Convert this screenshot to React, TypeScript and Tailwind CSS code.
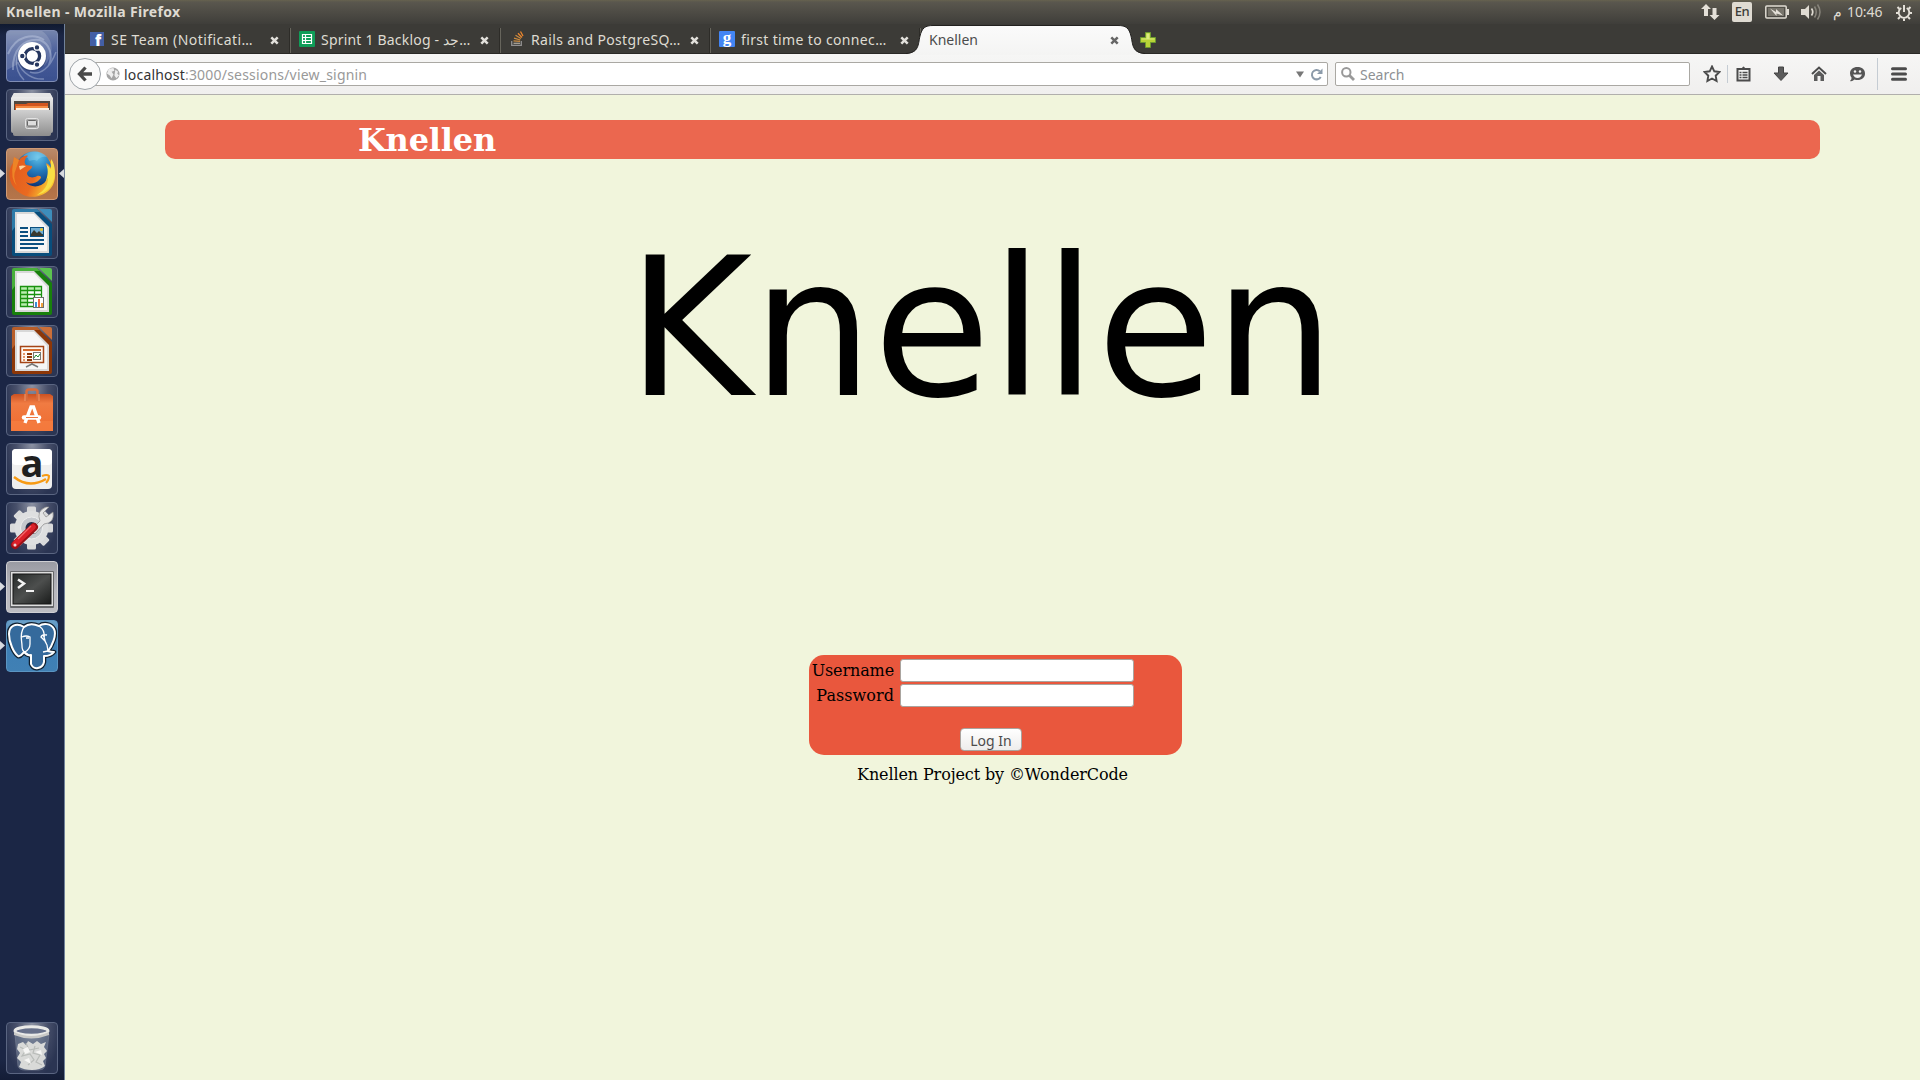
import React, { ReactNode } from 'react';

type Pip = 'none' | 'left' | 'both';

function Tile({ children, tone = 'plain', pip = 'none' }: { children: ReactNode; tone?: keyof typeof tones; pip?: Pip }) {
  return (
    <div className="relative h-[52px] w-16 shrink-0 pl-1.5">
      {pip !== 'none' && (
        <svg className="absolute left-0 top-[21px]" width="5" height="9" viewBox="0 0 5 9"><path d="M0 0L5 4.5L0 9Z" fill="#d7dae0" /></svg>
      )}
      {pip === 'both' && (
        <svg className="absolute left-[59px] top-[21px]" width="5" height="9" viewBox="0 0 5 9"><path d="M5 0L0 4.5L5 9Z" fill="#d7dae0" /></svg>
      )}
      <div className={`h-[52px] w-[52px] overflow-hidden rounded-[4px] border ${tones[tone]}`}>
        <svg className="-ml-px -mt-px block max-w-none" width="52" height="52" viewBox="0 0 52 52">{children}</svg>
      </div>
    </div>
  );
}

const tones = {
  plain: 'border-[#5a6581] bg-[radial-gradient(ellipse_at_50%_0%,#8c92a3_0%,#474f6a_45%,#2b3553_80%)]',
  ubuntu: 'border-[#7f8db5] bg-[linear-gradient(180deg,#7484ad,#4a5f9a_45%,#3b5190)]',
  fox: 'border-[#d09b76] bg-[linear-gradient(180deg,#b98a6a,#ab6b42_50%,#b5754a)]',
  term: 'border-[#cfcfd3] bg-[linear-gradient(180deg,#9a9ba3,#b9b9bf_60%,#bdbdc2)]',
  pg: 'border-[#5b95c2] bg-[linear-gradient(180deg,#6ba0c8,#3d7eb5_45%,#4080b4)]',
};

function Office({ dark, light, children }: { dark: string; light: string; children: ReactNode }) {
  return (
    <g>
      <path d="M8 2H31L46 17V47Q46 49 44 49H8Q6 49 6 47V4Q6 2 8 2Z" fill={dark} />
      <path d="M8 2H31L34 5H9V20L6 24V4Q6 2 8 2Z" fill={light} opacity=".7" />
      <path d="M9 5H28L43 20V46H9Z" fill="#d8d8d8" />
      <path d="M11 7H28L41 21V44H11Z" fill="#f6f6f6" />
      <path d="M33 2H44Q46 2 46 4V15Z" fill={light} />
      {children}
    </g>
  );
}

function Launcher() {
  return (
    <aside className="flex w-[65px] shrink-0 flex-col gap-[7px] border-r border-[#71829a] bg-[linear-gradient(180deg,#101a30_0px,#1b2645_12px,#1b2645_98%,#141d36)] pb-1.5 pt-1.5">
      <Tile tone="ubuntu">
        <g fill="none" stroke="#b9c5e0" opacity=".45">
          <path d="M7 40C6 20 18 8 34 10C44 14 47 25 43 35" strokeWidth="2" />
          <path d="M2 24C10 5 28 3 38 10" strokeWidth="2" />
          <path d="M18 50C6 38 10 22 18 16M24 42C34 46 44 38 50 22M12 32C16 44 28 50 38 49" strokeWidth="1.5" />
        </g>
        <path d="M1 1H36C51 12 46 28 38 36L26 12C12 12 10 25 12 34L1 40Z" fill="#fff" opacity=".15" />
        <circle cx="26" cy="27" r="14.5" fill="#24345f" opacity=".5" />
        <circle cx="26" cy="26" r="14" fill="#fff" />
        <circle cx="26.3" cy="26" r="7.3" fill="none" stroke="#26375f" strokeWidth="3.3" />
        <g fill="#26375f" stroke="#fff" strokeWidth="1.2"><circle cx="16.3" cy="26" r="2.8" /><circle cx="31" cy="17.4" r="2.8" /><circle cx="31" cy="34.6" r="2.8" /></g>
      </Tile>
      <Tile>
        <defs>
          <linearGradient id="steel" x2="0" y2="1"><stop stopColor="#d0d0d0" /><stop offset="1" stopColor="#8d8d8d" /></linearGradient>
          <linearGradient id="steelTop" x2="0" y2="1"><stop stopColor="#f4f4f4" /><stop offset="1" stopColor="#9a9a9a" /></linearGradient>
        </defs>
        <path d="M8 4H44L47 9V42Q47 44 45 44H7Q5 44 5 42V9Z" fill="url(#steelTop)" />
        <path d="M8 4H44L46 8H6Z" fill="#e5e5e5" />
        <rect x="8" y="12" width="36" height="11" fill="#504740" />
        <path d="M9 15H20L22 14H42V22H9Z" fill="#d3561e" />
        <path d="M10 17H42V21H10Z" fill="#f48b43" /><path d="M10 19H43V21H10Z" fill="#fff0df" />
        <path d="M7 21H45V45Q45 47 43 47H9Q7 47 7 45Z" fill="url(#steel)" />
        <rect x="19.5" y="29.5" width="13" height="10" rx="2" fill="#aaa" stroke="#e4e4e4" />
        <rect x="21.5" y="31.5" width="9" height="5.5" rx="1" fill="#ddd" stroke="#666" />
      </Tile>
      <Tile tone="fox" pip="both">
        <defs>
          <radialGradient id="globe" cx=".6" cy=".15" r=".8"><stop stopColor="#5fc0e8" /><stop offset=".5" stopColor="#2176b8" /><stop offset="1" stopColor="#0d3475" /></radialGradient>
          <linearGradient id="fur" x1="0" x2="1" y2=".4"><stop stopColor="#e0571e" /><stop offset=".65" stopColor="#ea6a20" /><stop offset="1" stopColor="#f9c630" /></linearGradient>
        </defs>
        <circle cx="28" cy="22" r="18.5" fill="url(#globe)" />
        <path d="M17 8C24 2 35 2 41 9C36 8 33 10 31 13C27 10 23 16 22 10Z" fill="#9bdcf4" opacity=".35" />
        <path d="M7 15L8 9L13 12C17 7 22 7 22 8C18 11 18 15 20 17L26 18C27 21 22 22 21 25C21 29 26 31 31 28C35 27 36 30 34 31C29 37 22 36 20 34C24 40 35 40 40 33C44 28 43 21 40 15C43 16 44 18 45 20C45 15 43 11 40 8C50 16 52 31 45 40C38 49 24 52 14 45C2 38 1 23 7 15Z" fill="url(#fur)" />
        <path d="M45 11C50 17 50 29 46 36C42 43 36 46 31 47C39 42 42 37 42 30L39 35C43 26 42 20 40 16L45 21Z" fill="#f8df45" />
        <path d="M7 15L8 9L13 12L10 21Q6 29 11 38Q4 31 7 15Z" fill="#f6a52d" opacity=".55" />
        <path d="M13 18Q17 17 20 18Q17 20 14 22Z" fill="#ffd29a" />
      </Tile>
      <Tile>
        <Office dark="#084d7c" light="#3d8dbb">
          <g fill="#0b4f80"><path d="M14 20h8v2h-8zM14 24h8v2h-8zM14 28h8v2h-8zM14 32h24v2H14zM14 36h24v2H14zM14 40h18v2H14z" /><path d="M24 20H38V30H24Z" /></g>
          <path d="M25 21H37V27H25Z" fill="#74aed2" /><path d="M25 29V27L28 23L31 26L33 24L37 28V29Z" fill="#39392f" /><circle cx="35.5" cy="22.5" r="1.5" fill="#e8c432" />
        </Office>
      </Tile>
      <Tile>
        <Office dark="#18800c" light="#5cc350">
          <path d="M14 20H36V41H14Z" fill="#fff" /><path d="M14 20H36V24H14ZM14 24H21V41H14Z" fill="#b9edae" />
          <path d="M14.5 20.5H35.5V40.5H14.5ZM14 24.5H36M14 28.5H36M14 32.5H36M14 36.5H36M21.5 20V41M28.5 20V41" fill="none" stroke="#1b9210" strokeWidth="1.3" />
          <rect x="27.5" y="31.5" width="10" height="10" fill="#fff" stroke="#6d6d6d" /><path d="M29 36h2v5h-2z" fill="#3a8fd4" /><path d="M32 33h2v8h-2z" fill="#f2663a" /><path d="M35 37h2v4h-2z" fill="#f0a13b" />
        </Office>
      </Tile>
      <Tile>
        <Office dark="#8d3708" light="#cb6f39">
          <path d="M14.5 21.5H37.5V37.5H14.5Z" fill="#fff8f1" stroke="#a54417" strokeWidth="1.5" />
          <path d="M17 24h18v2H17z" fill="#d46b2e" /><path d="M17 28h2v2h-2zM17 31h2v2h-2zM17 34h2v2h-2z" fill="#e59667" /><path d="M21 28h5v2h-5zM21 31h5v2h-5zM21 34h5v2h-5z" fill="#8d3708" />
          <rect x="27.5" y="27.5" width="7" height="7" fill="#fff" stroke="#777" /><path d="M28 33l2-3 2 2 2-3" fill="none" stroke="#208c31" />
          <path d="M26 38v2M26 39l-6 3M26 39l6 3" stroke="#777" strokeWidth="1.5" />
        </Office>
      </Tile>
      <Tile>
        <defs><linearGradient id="bag" x2="0" y2="1"><stop stopColor="#cb5122" /><stop offset=".25" stopColor="#f07b42" /><stop offset="1" stopColor="#ef6b30" /></linearGradient></defs>
        <path d="M5 12L8 10H44L47 12V47H5Z" fill="url(#bag)" />
        <path d="M5 37H47V47H5Z" fill="#f78245" opacity=".6" />
        <path d="M20.5 17V8Q20.5 5.5 23 5.5H29Q31.5 5.5 31.5 8V17" fill="none" stroke="#d96c3c" strokeWidth="2.5" />
        <path d="M19 10V17M33 10V17" stroke="#f29a6d" />
        <path d="M19 39L25 23H27.5L33 39" fill="none" stroke="#fff" strokeWidth="3.4" /><path d="M18 33.500H33" stroke="#fff" strokeWidth="4.500" strokeLinecap="round" /><path d="M20 33.500H32" stroke="#ef7640" strokeWidth="1" />
      </Tile>
      <Tile>
        <rect x="6" y="6" width="40" height="40" rx="4" fill="#efefef" />
        <rect x="6" y="6" width="40" height="16" rx="4" fill="#fff" />
        <text x="26" y="33.500" textAnchor="middle" fontFamily="Open Sans, sans-serif" fontWeight="700" fontSize="38" fill="#1f1f1f">a</text>
        <path d="M8 34Q23 46 40 36" fill="none" stroke="#f79a14" strokeWidth="2.500" /><path d="M36 33Q41 31 43 33Q43 37 40 40" fill="none" stroke="#f79a14" strokeWidth="2" />
      </Tile>
      <Tile>
        <g transform="translate(25.500 26)">
          {[0, 45, 90, 135].map((a) => <rect key={a} x="-4.500" y="-21.500" width="9" height="43" rx="1.500" fill="#d9dadb" transform={`rotate(${a})`} />)}
          <circle r="17" fill="#dedfe0" /><circle r="11" fill="#c6c9ce" stroke="#eee" /><circle r="6" fill="#252c47" />
        </g>
        <path d="M25 28L34 19Q30 9 40 5L43 5L37 11L40 15L47 10Q49 21 38 22L29 32Z" fill="#e5e5e5" stroke="#8a8a8a" strokeWidth=".7" />
        <path d="M9 43L28 25" stroke="#9d1117" strokeWidth="8" strokeLinecap="round" /><path d="M9 42L27 25" stroke="#db2029" strokeWidth="5.500" strokeLinecap="round" /><path d="M12 37L25 24" stroke="#f36a6d" strokeWidth="1.200" />
        <circle cx="9" cy="43" r="1.500" fill="#e9d9d9" />
      </Tile>
      <Tile tone="term" pip="left">
        <defs><linearGradient id="screen" x1="0" y1="0" x2="1" y2="1"><stop stopColor="#272b2a" /><stop offset=".5" stopColor="#4d4f4e" /><stop offset="1" stopColor="#191b1a" /></linearGradient></defs>
        <rect x="4" y="10" width="44" height="37" rx="1" fill="#66676a" /><rect x="5" y="11" width="42" height="34" fill="#dedede" /><rect x="7" y="13" width="38" height="30" fill="url(#screen)" stroke="#151515" />
        <path d="M12 18.500L18 22.500L12 27" fill="none" stroke="#f2f2f2" strokeWidth="2.500" /><path d="M20 30H28" stroke="#f2f2f2" strokeWidth="2" />
      </Tile>
      <Tile tone="pg" pip="left">
        <path d="M18 7C10 2 3 6 3 14C3 23 8 33 12 36C15 37 16 34 18 32Q21 36 25 35V44Q27 49 32 48Q37 47 38 42V36Q45 36 48 32Q45 32 42 31C46 26 51 15 48 9C45 3 37 3 33 6Q24 2 18 7Z" fill="#35699b" stroke="#101f2e" strokeWidth="4.500" strokeLinejoin="round" />
        <path d="M18 7C10 2 3 6 3 14C3 23 8 33 12 36C15 37 16 34 18 32Q21 36 25 35V44Q27 49 32 48Q37 47 38 42V36Q45 36 48 32Q45 32 42 31C46 26 51 15 48 9C45 3 37 3 33 6Q24 2 18 7Z" fill="#356a9c" stroke="#fff" strokeWidth="2" strokeLinejoin="round" />
        <path d="M18 7C13 14 16 20 16 26Q16 31 19 32Q24 29 24 24V17Q20 15 16 17M19 32L24 36M33 6Q39 10 38 17Q39 22 41 25L42 31L37 32M41 15Q36 14 35 17L39 21" fill="none" stroke="#fff" strokeWidth="1.300" /><path d="M20 18H23M37 16H39" stroke="#fff" strokeWidth="1.500" />
      </Tile>
      <div className="grow" />
      <Tile>
        <path d="M9 12H43L39 44Q38 48 33 48H19Q13 48 12 44Z" fill="#8290a5" opacity=".45" stroke="#a9b1bf" strokeWidth=".8" />
        <path d="M12 22L17 20L20 23L22 19L27 22L31 19L35 22L40 20L38 25L41 29L38 32L40 36L37 39L39 44Q34 48 26 48T13 45L15 40L11 36L14 31L11 27Z" fill="#d9dad8" />
        <path d="M14 25L20 28L16 34L24 32L28 38L22 43M29 24L27 31L34 33L30 40L36 43M20 21L23 28L33 26" fill="none" stroke="#b9bcb9" strokeWidth="1.200" />
        <path d="M17 27L22 25L24 30L19 32ZM29 30L35 28L36 33ZM18 38L23 36L25 42Z" fill="#f6f6f4" />
        <ellipse cx="25.500" cy="9" rx="16.500" ry="4.200" fill="#67708a" stroke="#e9e9e7" strokeWidth="3" /><path d="M8 10Q25 18 43 10V13Q25 20 8 13Z" fill="#c9c9c7" />
      </Tile>
    </aside>
  );
}

function Close({ dark = false }: { dark?: boolean }) {
  return <svg className="absolute left-[190px] top-3" width="9" height="9" viewBox="0 0 9 9"><path d="M1.300 1.300L7.700 7.700M7.700 1.300L1.300 7.700" stroke={dark ? '#666' : '#e3e1dc'} strokeWidth="2.500" /></svg>;
}

function Tab({ icon, label, spacing }: { icon: ReactNode; label: string; spacing: string }) {
  return (
    <div className="relative flex h-[29px] w-[210px] items-center pl-[9px] text-[#dfdbd2]">
      <span className="flex w-[22px] items-center pt-px">{icon}</span>
      <span className={`whitespace-nowrap pt-0.5 leading-5 ${spacing}`}>{label}</span>
      <Close />
      <span className="absolute right-[-1px] top-1 h-[25px] w-0.5 border-r border-[#67655c] bg-[#2d2c28]" />
    </div>
  );
}

function Tabs() {
  return (
    <div className="flex h-[30px] border-b border-[#2a2926] bg-[#3c3b37] pl-[15px] text-[14px]">
      <Tab label="SE Team (Notificati…" spacing="tracking-[0.45px]" icon={
        <svg className="ml-px overflow-visible" width="14" height="14"><rect width="14" height="14" fill="#435fa5" /><text x="5" y="13.500" fill="#fff" fontFamily="Open Sans, sans-serif" fontWeight="800" fontSize="15">f</text></svg>} />
      <Tab label="Sprint 1 Backlog - جد…" spacing="tracking-[0.2px]" icon={
        <svg width="16" height="16"><rect width="16" height="16" rx="1" fill="#0f9d58" /><path d="M3.500 3.500H12.500V12.500H3.500ZM3.500 6.500H12.500M3.500 9.500H12.500M6.500 3.500V12.500" fill="none" stroke="#fff" strokeWidth="1.200" /></svg>} />
      <Tab label="Rails and PostgreSQ…" spacing="tracking-[0.35px]" icon={
        <svg className="ml-0.5" width="14" height="16" fill="none"><path d="M.7 10V14.300H10.300V10" stroke="#919090" strokeWidth="1.300" /><path d="M2.500 12.300H9" stroke="#a8a295" strokeWidth="1.300" /><path d="M2.500 9.800L9 10.300M3 7.200L9.300 9M4.500 4.300L10 7.500" stroke="#cb8b40" strokeWidth="1.300" /><path d="M7 2.300L11 6.500M9.500.5L12 5" stroke="#ed872d" strokeWidth="1.300" /></svg>} />
      <Tab label="first time to connec…" spacing="tracking-[0.35px]" icon={
        <svg className="overflow-visible" width="16" height="16"><rect width="16" height="16" rx="1" fill="#4285f4" /><text x="8" y="11.500" textAnchor="middle" fill="#fff" fontFamily="Liberation Serif, serif" fontWeight="bold" fontSize="17">g</text></svg>} />
      <div className="relative h-[30px] w-[210px] pl-[9px] pt-[5px] text-[#4c4c4c]">
        <svg className="absolute left-[-14px] top-0" width="240" height="31" viewBox="0 0 240 31">
          <defs><linearGradient id="tab" x2="0" y2="1"><stop stopColor="#fbfbfb" /><stop offset="1" stopColor="#f4f4f3" /></linearGradient></defs>
          <path d="M0 30C13 29 12 21 14 12C16 4 19 1.500 27 1.500H212C220 1.500 223 4 225 12C227 21 226 29 239 30V31H0Z" fill="url(#tab)" />
          <path d="M0 29.500C13 28.500 12 21 14 12C16 4 19 1.500 27 1.500H212C220 1.500 223 4 225 12C227 21 226 28.500 239 29.500" fill="none" stroke="#22211f" />
        </svg>
        <span className="relative leading-5">Knellen</span>
        <Close dark />
      </div>
      <svg className="ml-[10px] mt-2" width="16" height="16" viewBox="0 0 16 16"><path d="M5.500.5H10.500V5.500H15.500V10.500H10.500V15.500H5.500V10.500H.5V5.500H5.500Z" fill="#b8d337" stroke="#6d9a2f" /><path d="M6.500 1.500h3v5h5v1h-13v-1h5z" fill="#dcec80" /></svg>
    </div>
  );
}

function Toolbar() {
  return (
    <div className="flex h-[41px] items-center border-b border-[#b1afac] bg-[linear-gradient(180deg,#f6f6f5,#f0efee)] text-[14px]">
      <div className="relative z-10 ml-1 flex h-8 w-8 items-center justify-center rounded-full border border-[#9da3a8] bg-[#fafafa]">
        <svg width="16" height="16" viewBox="0 0 16 16"><path d="M8.500 1.500L2.500 8L8.500 14.500M3 8H15" fill="none" stroke="#4a4a4a" strokeWidth="3.300" /></svg>
      </div>
      <div className="-ml-2 flex h-6 w-[1235px] items-center rounded-r-[2px] border border-[#aaa8a3] bg-white pl-[12px] pr-1">
        <svg width="14" height="14" viewBox="0 0 15 15"><circle cx="7.500" cy="7.500" r="7" fill="#a5a5a5" /><path d="M3 2L8 1L9 4L6 5L8 8L6 12L4 9L1 7ZM10 3L13 5L12 7L14 9L11 12L9 9Z" fill="#eee" /></svg>
        <span className="ml-[4px] grow whitespace-nowrap pt-0.5 leading-5 tracking-[0.2px] text-[#999]"><span className="text-[#333]">localhost</span>:3000/sessions/view_signin</span>
        <svg width="8" height="7" viewBox="0 0 8 7"><path d="M0 .5H8L4 6.500Z" fill="#777" /></svg>
        <svg className="ml-[6px]" width="13" height="13" viewBox="0 0 13 13"><path d="M9.800 3.200A4.700 4.700 0 1 0 10.700 9" fill="none" stroke="#8c9baa" strokeWidth="2" /><path d="M12.500.5V6H7Z" fill="#8c9baa" /></svg>
      </div>
      <div className="ml-[7px] flex h-6 w-[355px] items-center rounded-[2px] border border-[#aaa8a3] bg-white pl-[5px] text-[#8d9093]">
        <svg width="14" height="14" viewBox="0 0 14 14"><circle cx="5.300" cy="5.300" r="4.200" fill="none" stroke="#999" strokeWidth="2" /><path d="M8.500 8.500L13 13" stroke="#999" strokeWidth="2.800" /></svg>
        <span className="ml-[5px] pt-0.5 leading-5">Search</span>
      </div>
      <div className="flex grow items-center pl-[13px]">
        <svg width="18" height="18" viewBox="0 0 18 18"><path d="M9 1.500L11.300 6.300L16.500 7L12.700 10.700L13.600 16L9 13.500L4.400 16L5.300 10.700L1.500 7L6.700 6.300Z" fill="none" stroke="#4b4b4b" strokeWidth="1.900" /></svg>
        <span className="ml-[6px] h-[18px] w-px bg-[#c5ccd3]" />
        <svg className="ml-[8px]" width="15" height="16" viewBox="0 0 15 16"><path d="M1.500 3H13.500V14.500H1.500Z" fill="none" stroke="#4b4b4b" strokeWidth="2" /><path d="M4 4V2H6Q7.500-1 9 2H11V4Z" fill="#4b4b4b" /><path d="M3.500 6.500h2M3.500 9h2M3.500 11.500h2M6.500 6.500h5M6.500 9h5M6.500 11.500h5" stroke="#4b4b4b" strokeWidth="1.500" /></svg>
        <svg className="ml-[22px]" width="16" height="16" viewBox="0 0 16 16"><path d="M5.500 1H10.500V7H15L8 14.500L1 7H5.500Z" fill="#5b5b5b" stroke="#444" /></svg>
        <svg className="ml-[22px]" width="16" height="16" viewBox="0 0 16 16"><path d="M1 8L8 1.500L15 8" fill="none" stroke="#4b4b4b" strokeWidth="2" /><path d="M3 9L8 4.500L13 9V15H9.500V10H6.500V15H3Z" fill="#5b5b5b" /></svg>
        <svg className="ml-[22px]" width="17" height="16" viewBox="0 0 17 16"><path d="M8.500 1C13 1 16 3.500 16 7.500S13 14 8.500 14Q7 14 5.500 13.500Q3 16 1 15Q3 13 2.500 11.500Q1 9.500 1 7.500C1 3.500 4 1 8.500 1Z" fill="#555" /><circle cx="6" cy="5.500" r="1.200" fill="#f3f3f3" /><circle cx="11" cy="5.500" r="1.200" fill="#f3f3f3" /><path d="M4 8.500H13Q11.500 12 8.500 12T4 8.500Z" fill="#f3f3f3" /></svg>
        <span className="ml-[11px] h-8 w-px bg-[#c5ccd3]" />
        <svg className="ml-[13px]" width="16" height="14" viewBox="0 0 16 14"><path d="M1.500 1.700H14.500M1.500 7H14.500M1.500 12.300H14.500" stroke="#4b4b4b" strokeWidth="3" strokeLinecap="round" /></svg>
      </div>
    </div>
  );
}

function Panel() {
  return (
    <header className="flex h-6 items-center bg-[linear-gradient(180deg,#67624f_0px,#5a574e_2px,#3f3e3a)] text-[#dfdbd2]">
      <span className="ml-[6px] grow whitespace-nowrap text-[14px] font-bold leading-6 tracking-[0.35px]">Knellen - Mozilla Firefox</span>
      <svg width="19" height="18" viewBox="0 0 19 18" fill="#e4e0d8"><path d="M5 1L10 6H7V13H3V6H0ZM13.500 17L8.500 12H11.500V5H15.500V12H18.500Z" /></svg>
      <span className="ml-3 flex h-5 w-5 items-center justify-center rounded-[2px] bg-[#dfdbd2] text-[13px] font-medium tracking-[-0.5px] text-[#3c3b37]">En</span>
      <svg className="ml-[13px]" width="24" height="14" viewBox="0 0 24 14"><rect x=".8" y="1" width="20.400" height="12" rx="1" fill="none" stroke="#dfdbd2" strokeWidth="1.500" /><path d="M22 4h2v6h-2z" fill="#dfdbd2" /><path d="M3 3H19V11H3Z" fill="#77746b" /><path d="M5 3.500L11 7V4L18 10.500L11.500 8.500V11Z" fill="#e4e0d8" /></svg>
      <svg className="ml-3" width="20" height="18" viewBox="0 0 20 18"><path d="M0 6H4L8 2V16L4 12H0Z" fill="#dfdbd2" /><path d="M10.500 5.500Q13 9 10.500 12.500" fill="none" stroke="#dfdbd2" strokeWidth="1.700" /><path d="M13.500 3.500Q17 9 13.500 14.500M16.500 1.500Q21.500 9 16.500 16.500" fill="none" stroke="#88857c" strokeWidth="1.500" /></svg>
      <span className="ml-3 w-[14px] text-[14px] leading-6">م</span>
      <span className="w-[37px] whitespace-nowrap text-[14px] leading-6 tracking-[-0.1px]">10:46</span>
      <svg className="ml-3 mr-2" width="16" height="17" viewBox="0 0 16 17" fill="none" stroke="#e4e0d8"><path d="M5.300 4A5.300 5.300 0 1 0 10.700 4" strokeWidth="1.900" /><path d="M8 1V8M1.500 3L3.500 5M14.500 3L12.500 5M0 9H2.500M13.500 9H16M2 15L4 13M14 15L12 13M8 14.500V17" strokeWidth="2" /></svg>
    </header>
  );
}

function Page() {
  return (
    <main className="flex grow flex-col items-center bg-[#f1f5dc] pt-[25px] font-['DejaVu_Serif',serif] text-[16px] leading-[19px] text-black">
      <div className="flex h-[39px] w-[1655px] items-center rounded-[10px] bg-[#eb674f] pl-[193px]">
        <h1 className="pt-0.5 text-[32px] font-bold leading-[39px] tracking-[-0.2px] text-white">Knellen</h1>
      </div>
      <div className="mr-[16px] mt-[57px] h-[439px] w-[715px] origin-left scale-x-[0.989] whitespace-nowrap font-['DejaVu_Sans',sans-serif] text-[193px] leading-[225px]">Knellen</div>
      <form className="ml-[6px] h-[100px] w-[373px] rounded-[15px] bg-[#e9573d] pt-[4px]">
        <div className="flex h-[25px] items-start">
          <label className="w-[85px] pt-[2px] text-right tracking-[-0.12px]">Username</label>
          <input className="ml-[6px] h-[23px] w-[234px] rounded-[3px] border border-[#aaa49f] bg-white" />
        </div>
        <div className="flex h-[44px] items-start">
          <label className="w-[85px] pt-[2px] text-right tracking-[0.05px]">Password</label>
          <input type="password" className="ml-[6px] h-[23px] w-[234px] rounded-[3px] border border-[#aaa49f] bg-white" />
        </div>
        <button type="button" className="ml-[151px] block h-[23px] w-[62px] rounded-[4px] border border-[#aaa49f] bg-[linear-gradient(180deg,#fff,#eeedec)] pt-px font-['Noto_Sans',sans-serif] text-[14px] leading-[21px] text-[#4c4c4c]">Log In</button>
      </form>
      <footer className="mt-[10px] tracking-[-0.12px]">Knellen Project by ©WonderCode</footer>
    </main>
  );
}

export default function App() {
  return (
    <div className="flex h-[1080px] w-[1920px] flex-col overflow-hidden font-['Noto_Sans','Open_Sans',sans-serif]">
      <Panel />
      <div className="flex h-[1056px]">
        <Launcher />
        <div className="flex w-[1855px] flex-col">
          <Tabs />
          <Toolbar />
          <Page />
        </div>
      </div>
    </div>
  );
}
